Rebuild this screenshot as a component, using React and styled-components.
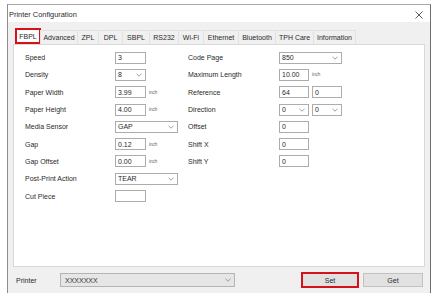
import React from 'react';
import styled, { createGlobalStyle } from 'styled-components';

const GlobalStyles = createGlobalStyle`
  * { box-sizing: border-box; }
  body {
    margin: 0;
    background: #ffffff;
    font-family: "Liberation Sans", Arial, sans-serif;
    font-size: 7px;
    color: #2a2a2a;
  }
`

const Window = styled.div`
  margin: 4px 0 0 7px;
  width: 424px;
  height: 289px;
  background: #f0f0f0;
  border-top: 1px solid #a8a8a8;
  border-left: 1px solid #8c8c8c;
  border-right: 1px solid #6e6e6e;
  display: flex;
  flex-direction: column;
`

const TitleBar = styled.div`
  height: 17px;
  background: #ffffff;
  display: flex;
  align-items: center;
  justify-content: space-between;
  padding: 2px 7px 0 1px;
  font-size: 7.4px;
`

const Body = styled.div`
  flex: 1;
  display: flex;
  flex-direction: column;
  padding: 6px 5px 0 5px;
`

const TabStrip = styled.div`
  display: flex;
  align-items: flex-end;
  height: 16px;
  padding-left: 2px;
`

const Tab = styled.div`
  width: ${p => p.w}px;
  height: ${p => (p.active ? 16 : 14)}px;
  display: flex;
  align-items: center;
  justify-content: center;
  background: ${p => (p.active ? '#ffffff' : '#f0f0f0')};
  border: ${p => (p.active ? '2px solid #d3121c' : '1px solid #e2e2e2')};
  border-bottom: ${p => (p.active ? '2px solid #d3121c' : 'none')};
  margin-right: -1px;
  white-space: nowrap;
`

const Panel = styled.div`
  height: 223px;
  background: #ffffff;
  border: 1px solid #d9d9d9;
  padding: 4px 11px 0 11px;
  display: grid;
  grid-template-columns: 163px 1fr;
  align-items: start;
`

const Column = styled.div`
  display: grid;
  grid-template-columns: ${p => p.label}px auto;
  grid-auto-rows: 17.3px;
  align-items: center;
`

const Controls = styled.div`
  display: flex;
  align-items: center;
  gap: 3px;
`

const Field = styled.div`
  width: ${p => p.w || 31}px;
  height: 12px;
  border: 1px solid #acacac;
  background: #ffffff;
  display: flex;
  align-items: center;
  justify-content: space-between;
  padding: 0 3px 0 2px;
`

const Unit = styled.span`
  font-size: 4.6px;
  color: #666;
`

const Footer = styled.div`
  flex: 1;
  display: flex;
  align-items: center;
  padding: 0 2px 0 3px;
`

const FooterLabel = styled.span`
  width: 44px;
`

const Combo = styled.div`
  width: 175px;
  height: 14px;
  background: #e6e6e6;
  border: 1px solid #b4b4b4;
  display: flex;
  align-items: center;
  justify-content: space-between;
  padding: 0 3px 0 4px;
  color: #333;
`

const Buttons = styled.div`
  margin-left: auto;
  display: flex;
  align-items: center;
  gap: 4px;
`

const Button = styled.div`
  width: ${p => p.w}px;
  height: ${p => (p.marked ? 16 : 14)}px;
  display: flex;
  align-items: center;
  justify-content: center;
  background: #e1e1e1;
  border: ${p => (p.marked ? '2px solid #d3121c' : '1px solid #c2c2c2')};
`

const Chevron = () => (
  <svg width="6" height="4" viewBox="0 0 6 4">
    <polyline points="0.5,0.8 3,3.2 5.5,0.8" fill="none" stroke="#888" strokeWidth="0.8" />
  </svg>
)

const Close = () => (
  <svg width="8" height="8" viewBox="0 0 8 8">
    <path d="M0.5 0.5 L7.5 7.5 M7.5 0.5 L0.5 7.5" stroke="#333" strokeWidth="0.8" />
  </svg>
)

const tabs = [
  ['FBPL', 26], ['Advanced', 38], ['ZPL', 22], ['DPL', 25], ['SBPL', 28],
  ['RS232', 30], ['Wi-Fi', 26], ['Ethernet', 36], ['Bluetooth', 38],
  ['TPH Care', 39], ['Information', 43],
]

function Input({ value = '', w }) {
  return <Field w={w}><span>{value}</span></Field>
}

function Select({ value, w }) {
  return <Field w={w}><span>{value}</span><Chevron /></Field>
}

function App() {
  return (
    <>
      <GlobalStyles />
      <Window>
        <TitleBar>
          <span>Printer Configuration</span>
          <Close />
        </TitleBar>
        <Body>
          <TabStrip>
            {tabs.map(([name, w], i) => (
              <Tab key={name} w={w} active={i === 0}>{name}</Tab>
            ))}
          </TabStrip>
          <Panel>
            <Column label={90}>
              <span>Speed</span>
              <Controls><Input value="3" /></Controls>
              <span>Density</span>
              <Controls><Select value="8" /></Controls>
              <span>Paper Width</span>
              <Controls><Input value="3.99" /><Unit>inch</Unit></Controls>
              <span>Paper Height</span>
              <Controls><Input value="4.00" /><Unit>inch</Unit></Controls>
              <span>Media Sensor</span>
              <Controls><Select value="GAP" w={63} /></Controls>
              <span>Gap</span>
              <Controls><Input value="0.12" /><Unit>inch</Unit></Controls>
              <span>Gap Offset</span>
              <Controls><Input value="0.00" /><Unit>inch</Unit></Controls>
              <span>Post-Print Action</span>
              <Controls><Select value="TEAR" w={63} /></Controls>
              <span>Cut Piece</span>
              <Controls><Input /></Controls>
            </Column>
            <Column label={91}>
              <span>Code Page</span>
              <Controls><Select value="850" w={63} /></Controls>
              <span>Maximum Length</span>
              <Controls><Input value="10.00" w={30} /><Unit>inch</Unit></Controls>
              <span>Reference</span>
              <Controls><Input value="64" w={30} /><Input value="0" w={30} /></Controls>
              <span>Direction</span>
              <Controls><Select value="0" w={30} /><Select value="0" w={30} /></Controls>
              <span>Offset</span>
              <Controls><Input value="0" w={30} /></Controls>
              <span>Shift X</span>
              <Controls><Input value="0" w={30} /></Controls>
              <span>Shift Y</span>
              <Controls><Input value="0" w={30} /></Controls>
            </Column>
          </Panel>
          <Footer>
            <FooterLabel>Printer</FooterLabel>
            <Combo><span>XXXXXXX</span><Chevron /></Combo>
            <Buttons>
              <Button w={58} marked>Set</Button>
              <Button w={60}>Get</Button>
            </Buttons>
          </Footer>
        </Body>
      </Window>
    </>
  );
}

export default App;
